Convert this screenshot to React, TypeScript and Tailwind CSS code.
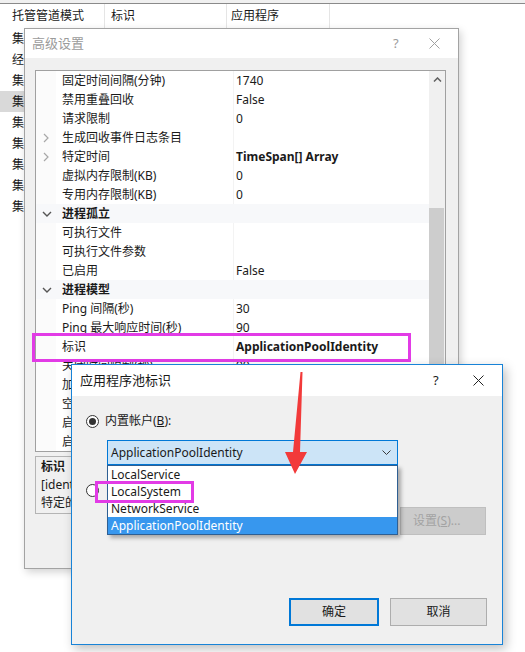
import React from "react";

type Row = {
  name: string;
  value?: string;
  cat?: boolean;
  expand?: boolean;
  bold?: boolean;
};

const rows: Row[] = [
  { name: "固定时间间隔(分钟)", value: "1740" },
  { name: "禁用重叠回收", value: "False" },
  { name: "请求限制", value: "0" },
  { name: "生成回收事件日志条目", expand: true },
  { name: "特定时间", value: "TimeSpan[] Array", expand: true, bold: true },
  { name: "虚拟内存限制(KB)", value: "0" },
  { name: "专用内存限制(KB)", value: "0" },
  { name: "进程孤立", cat: true },
  { name: "可执行文件" },
  { name: "可执行文件参数" },
  { name: "已启用", value: "False" },
  { name: "进程模型", cat: true },
  { name: "Ping 间隔(秒)", value: "30" },
  { name: "Ping 最大响应时间(秒)", value: "90" },
  { name: "标识", value: "ApplicationPoolIdentity", bold: true },
  { name: "关闭时间限制(秒)", value: "90" },
  { name: "加载用户配置文件", value: "True" },
  { name: "空闲超时(分钟)", value: "20" },
  { name: "启动时间限制(秒)", value: "90" },
  { name: "启用 Ping", value: "True" },
];

const listItems = ["集成", "经典", "集成", "集成", "集成", "集成", "集成", "集成", "集成"];

function CloseIcon({ color }: { color: string }) {
  return (
    <svg width="11" height="11" viewBox="0 0 11 11">
      <path d="M0.5 0.5 L10.5 10.5 M10.5 0.5 L0.5 10.5" stroke={color} strokeWidth="1" fill="none" />
    </svg>
  );
}

function Chevron({ open }: { open: boolean }) {
  if (open) {
    return (
      <svg width="10" height="6" viewBox="0 0 10 6">
        <path d="M1 1 L5 5 L9 1" stroke="#555" strokeWidth="1.4" fill="none" />
      </svg>
    );
  }
  return (
    <svg width="6" height="10" viewBox="0 0 6 10">
      <path d="M1 1 L5 5 L1 9" stroke="#a8a8a8" strokeWidth="1.2" fill="none" />
    </svg>
  );
}

function GridRow({ row }: { row: Row }) {
  if (row.cat) {
    return (
      <div className="flex h-[19px] items-center bg-[#f7f8fa]">
        <div className="flex w-[20px] justify-center pl-[1px]">
          <Chevron open />
        </div>
        <div className="pl-[6px] font-bold text-[#1a1a1a]">{row.name}</div>
      </div>
    );
  }
  return (
    <div className="flex h-[19px] items-center">
      <div className="flex h-full w-[20px] items-center justify-center bg-[#fbfbfb]">
        {row.expand && <Chevron open={false} />}
      </div>
      <div className="w-[177px] whitespace-nowrap pl-[6px] text-[#1a1a1a]">{row.name}</div>
      <div
        className={`flex h-full flex-1 items-center whitespace-nowrap border-l border-[#f3f3f3] pl-[2px] text-[#1a1a1a] ${
          row.bold ? "font-bold" : ""
        }`}
      >
        {row.value}
      </div>
    </div>
  );
}

function AdvancedSettings() {
  return (
    <div className="absolute left-[24px] top-[28px] flex h-[541px] w-[435px] flex-col border border-[#a3a3a3] bg-[#f0f0f0] shadow-[2px_3px_8px_rgba(0,0,0,0.18)]">
      <div className="flex h-[29px] items-center bg-white pl-[7px] text-[#9b9b9b]">
        <span className="flex-1 text-[13px]">高级设置</span>
        <span className="w-[24px] text-[13px]">?</span>
        <span className="mr-[18px] ml-[12px] flex">
          <CloseIcon color="#a0a0a0" />
        </span>
      </div>
      <div className="flex flex-col pl-[10px] pt-[12px]">
        <div className="flex h-[382px] w-[411px] border border-[#a0a0a0] bg-white">
          <div className="flex flex-1 flex-col">
            {rows.map((r, i) => (
              <GridRow key={i} row={r} />
            ))}
          </div>
          <div className="flex w-[16px] flex-col bg-[#f0f0f0]">
            <div className="flex h-[17px] items-center justify-center">
              <svg width="9" height="5" viewBox="0 0 9 5">
                <path d="M1 4.5 L4.5 1 L8 4.5" stroke="#606060" strokeWidth="1.5" fill="none" />
              </svg>
            </div>
            <div className="h-[120px]" />
            <div className="mr-[1px] h-[200px] bg-[#cdcdcd]" />
          </div>
        </div>
        <div className="mt-[4px] h-[58px] w-[411px] overflow-hidden whitespace-nowrap border border-[#b4b4b4] px-[5px] pt-[1px] leading-[18px] text-[#1a1a1a]">
          <div className="font-bold">标识</div>
          <div>[identityType,username,password] 配置应用程序池以作为内置帐户运行</div>
          <div>特定的用户标识运行。</div>
        </div>
      </div>
    </div>
  );
}

function PoolIdentityDialog() {
  return (
    <div className="absolute left-[71px] top-[364px] z-20 flex h-[281px] w-[432px] flex-col border border-[#1883d7] bg-[#f0f0f0] shadow-[3px_4px_10px_rgba(0,0,0,0.25)]">
      <div className="flex h-[31px] items-center bg-white pl-[8px] text-[#1a1a1a]">
        <span className="flex-1 text-[13px]">应用程序池标识</span>
        <span className="w-[28px] text-[13px]">?</span>
        <span className="mr-[18px] ml-[12px] flex">
          <CloseIcon color="#222" />
        </span>
      </div>
      <div className="relative flex flex-1 flex-col pl-[14px] pt-[16px] text-[#1a1a1a]">
        <div className="flex h-[18px] items-center gap-[6px]">
          <span className="flex h-[13px] w-[13px] items-center justify-center rounded-full border border-[#333] bg-white">
            <span className="h-[7px] w-[7px] rounded-full bg-[#333]" />
          </span>
          <span>
            内置帐户(<span className="underline">B</span>):
          </span>
        </div>
        <div className="ml-[21px] mt-[10px] flex h-[25px] w-[291px] items-center border border-[#0078d7] bg-[#cce4f7] pl-[3px] pr-[6px]">
          <span className="flex-1">ApplicationPoolIdentity</span>
          <svg width="9" height="5" viewBox="0 0 9 5">
            <path d="M0.5 0.5 L4.5 4.5 L8.5 0.5" stroke="#3a3a3a" strokeWidth="1" fill="none" />
          </svg>
        </div>
        <div className="mt-[16px] flex h-[18px] items-center">
          <span className="h-[13px] w-[13px] rounded-full border border-[#333] bg-white" />
        </div>
        <div className="ml-[314px] mt-[8px] flex h-[28px] w-[86px] items-center border border-[#bfbfbf] bg-[#cccccc] pl-[12px] text-[#a3a3a3]">
          设置(<span className="underline">S</span>)...
        </div>
        <div className="mt-[63px] flex justify-end gap-[11px] pr-[15px]">
          <div className="flex h-[28px] w-[90px] items-center justify-center border-2 border-[#0078d7] bg-[#e1e1e1]">
            确定
          </div>
          <div className="flex h-[28px] w-[97px] items-center justify-center border border-[#adadad] bg-[#e1e1e1]">
            取消
          </div>
        </div>

        <div className="absolute left-[35px] top-[69px] z-10 flex h-[70px] w-[291px] flex-col border border-[#2e5f93] bg-white shadow-[3px_3px_4px_rgba(0,0,0,0.3)]">
          <div className="flex h-[17px] items-center pl-[3px]">LocalService</div>
          <div className="flex h-[17px] items-center pl-[3px]">LocalSystem</div>
          <div className="flex h-[17px] items-center pl-[3px]">NetworkService</div>
          <div className="flex h-[17px] items-center bg-[#3797ee] pl-[3px] text-white">ApplicationPoolIdentity</div>
        </div>
      </div>
    </div>
  );
}

export default function App() {
  return (
    <div className="relative h-[652px] w-[525px] overflow-hidden bg-white font-['Noto_Sans','Noto_Sans_CJK_SC',sans-serif] text-[12px] text-[#1a1a1a]">
      <div className="h-[3px] bg-[#f0f0f0]" />
      <div className="h-px bg-[#8a8a8a]" />
      <div className="flex h-[24px] items-center">
        <div className="flex h-full w-[105px] items-center border-r border-[#e5e5e5] pl-[12px]">托管管道模式</div>
        <div className="flex h-full w-[122px] items-center border-r border-[#e5e5e5] pl-[6px]">标识</div>
        <div className="flex h-full w-[103px] items-center border-r border-[#e5e5e5] pl-[4px]">应用程序</div>
      </div>
      <div className="flex w-[105px] flex-col">
        {listItems.map((t, i) => (
          <div
            key={i}
            className={`flex h-[21px] items-center pl-[12px] ${i === 3 ? "bg-[#d9d9d9]" : ""}`}
          >
            {t}
          </div>
        ))}
      </div>

      <AdvancedSettings />
      <PoolIdentityDialog />

      <div className="absolute left-[32px] top-[333px] z-10 h-[29px] w-[379px] border-[3px] border-[#e23be6]" />
      <div className="absolute left-[95px] top-[481px] z-30 h-[22px] w-[99px] border-[3px] border-[#e23be6]" />

      <svg className="absolute left-[280px] top-[368px] z-30" width="32" height="110" viewBox="0 0 32 110">
        <polygon points="20.5,4 22.5,4 20,84 27,84 15,106 5,84 13,84" fill="#f23a3a" />
      </svg>
    </div>
  );
}
